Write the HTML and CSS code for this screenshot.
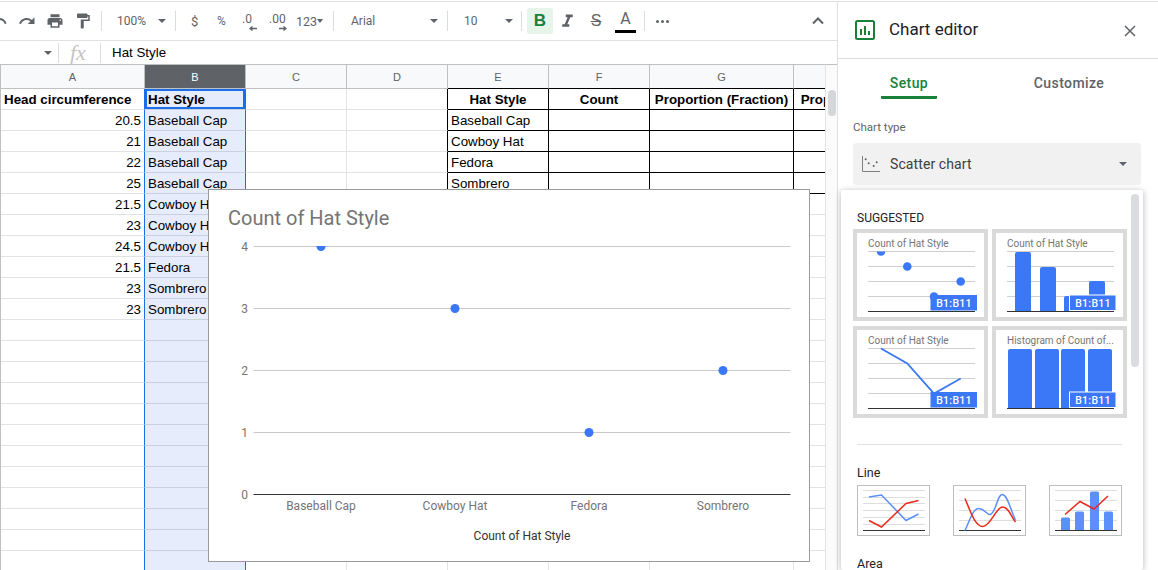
FILE: index.html
```html
<!DOCTYPE html>
<html lang="en">
<head>
  <meta charset="UTF-8">
  <title>Hat Style - Chart editor</title>
  <link rel="stylesheet" href="styles.css">
</head>
<body>

  <div class="page">
    <div class="main">

      <div class="toolbar">
        <svg class="tool-undo" viewBox="14 0 10 24" fill="#5f6368"><path d="M12.5 8c-2.65 0-5.05.99-6.9 2.6L2 7v9h9l-3.62-3.62c1.39-1.16 3.16-1.88 5.12-1.88 3.54 0 6.55 2.31 7.6 5.5l2.37-.78C21.08 11.03 17.15 8 12.5 8z"/></svg>
        <svg class="tool-icon redo" viewBox="0 0 24 24" fill="#5f6368"><path d="M18.4 10.6C16.55 8.99 14.15 8 11.5 8c-4.65 0-8.58 3.03-9.96 7.22L3.9 16c1.05-3.19 4.05-5.5 7.6-5.5 1.95 0 3.73.72 5.12 1.88L13 16h9V7l-3.6 3.6z"/></svg>
        <svg class="tool-icon print" viewBox="0 0 24 24" fill="#5f6368"><path d="M19 8H5c-1.66 0-3 1.34-3 3v6h4v4h12v-4h4v-6c0-1.66-1.34-3-3-3zm-3 11H8v-5h8v5zm3-7c-.55 0-1-.45-1-1s.45-1 1-1 1 .45 1 1-.45 1-1 1zm-1-9H6v4h12V3z"/></svg>
        <svg class="tool-icon paint" viewBox="0 0 24 24" fill="#5f6368"><path d="M18 4V3c0-.55-.45-1-1-1H5c-.55 0-1 .45-1 1v4c0 .55.45 1 1 1h12c.55 0 1-.45 1-1V6h1v4H9v11c0 .55.45 1 1 1h2c.55 0 1-.45 1-1v-9h8V4h-3z"/></svg>
        <span class="sep sep-zoom"></span>
        <span class="tool-text zoom-val">100%</span>
        <span class="caret caret-zoom"></span>
        <span class="sep sep-money"></span>
        <span class="tool-text dollar">$</span>
        <span class="tool-text percent">%</span>
        <span class="deci deci-less">.0<svg viewBox="0 0 8 5"><path d="M8 2.5H2M3.5 .5L1 2.5l2.5 2" fill="none" stroke="#5f6368" stroke-width="1.4"/></svg></span>
        <span class="deci deci-more">.00<svg viewBox="0 0 8 5"><path d="M0 2.5h6M4.5 .5L7 2.5l-2.5 2" fill="none" stroke="#5f6368" stroke-width="1.4"/></svg></span>
        <span class="tool-text format">123</span>
        <span class="caret caret-format"></span>
        <span class="sep sep-font"></span>
        <span class="tool-text font-name">Arial</span>
        <span class="caret caret-font"></span>
        <span class="sep sep-size"></span>
        <span class="tool-text font-size">10</span>
        <span class="caret caret-size"></span>
        <span class="sep sep-bold"></span>
        <span class="bold-btn">B</span>
        <svg class="tool-icon italic" viewBox="0 0 24 24" fill="#5f6368"><path d="M10 4v3h2.21l-3.42 8H6v3h8v-3h-2.21l3.42-8H18V4z"/></svg>
        <span class="strike">S</span>
        <span class="text-color">A</span>
        <span class="sep sep-more"></span>
        <span class="more-dots"><i></i><i></i><i></i></span>
        <svg class="collapse" viewBox="0 0 12 8"><path d="M1 6.5l5-5 5 5" fill="none" stroke="#5f6368" stroke-width="2"/></svg>
      </div>

      <div class="formula-bar">
        <span class="caret caret-name"></span>
        <span class="sep sep-name"></span>
        <span class="fx">fx</span>
        <span class="sep sep-fx"></span>
        <span class="formula-text">Hat Style</span>
      </div>

      <div class="sheet-area">
        <div class="sheet-wrap">
          <table class="sheet">
            <colgroup>
              <col class="col-wide"><col class="col-std"><col class="col-std"><col class="col-std">
              <col class="col-std"><col class="col-std"><col class="col-wide"><col class="col-wide">
            </colgroup>
            <tr class="heads"><th>A</th><th class="on">B</th><th>C</th><th>D</th><th>E</th><th>F</th><th>G</th><th>H</th></tr>
            <tr><td class="b">Head circumference</td><td class="b active">Hat Style</td><td></td><td class="rk"></td><td class="box b c">Hat Style</td><td class="box b c">Count</td><td class="box b c">Proportion (Fraction)</td><td class="box b c">Proportion (Percent)</td></tr>
            <tr><td class="n">20.5</td><td>Baseball Cap</td><td></td><td class="rk"></td><td class="box">Baseball Cap</td><td class="box"></td><td class="box"></td><td class="box"></td></tr>
            <tr><td class="n">21</td><td>Baseball Cap</td><td></td><td class="rk"></td><td class="box">Cowboy Hat</td><td class="box"></td><td class="box"></td><td class="box"></td></tr>
            <tr><td class="n">22</td><td>Baseball Cap</td><td></td><td class="rk"></td><td class="box">Fedora</td><td class="box"></td><td class="box"></td><td class="box"></td></tr>
            <tr><td class="n">25</td><td>Baseball Cap</td><td></td><td class="rk"></td><td class="box">Sombrero</td><td class="box"></td><td class="box"></td><td class="box"></td></tr>
            <tr><td class="n">21.5</td><td>Cowboy Hat</td><td></td><td></td><td></td><td></td><td></td><td></td></tr>
            <tr><td class="n">23</td><td>Cowboy Hat</td><td></td><td></td><td></td><td></td><td></td><td></td></tr>
            <tr><td class="n">24.5</td><td>Cowboy Hat</td><td></td><td></td><td></td><td></td><td></td><td></td></tr>
            <tr><td class="n">21.5</td><td>Fedora</td><td></td><td></td><td></td><td></td><td></td><td></td></tr>
            <tr><td class="n">23</td><td>Sombrero</td><td></td><td></td><td></td><td></td><td></td><td></td></tr>
            <tr><td class="n">23</td><td>Sombrero</td><td></td><td></td><td></td><td></td><td></td><td></td></tr>
            <tr><td></td><td></td><td></td><td></td><td></td><td></td><td></td><td></td></tr>
            <tr><td></td><td></td><td></td><td></td><td></td><td></td><td></td><td></td></tr>
            <tr><td></td><td></td><td></td><td></td><td></td><td></td><td></td><td></td></tr>
            <tr><td></td><td></td><td></td><td></td><td></td><td></td><td></td><td></td></tr>
            <tr><td></td><td></td><td></td><td></td><td></td><td></td><td></td><td></td></tr>
            <tr><td></td><td></td><td></td><td></td><td></td><td></td><td></td><td></td></tr>
            <tr><td></td><td></td><td></td><td></td><td></td><td></td><td></td><td></td></tr>
            <tr><td></td><td></td><td></td><td></td><td></td><td></td><td></td><td></td></tr>
            <tr><td></td><td></td><td></td><td></td><td></td><td></td><td></td><td></td></tr>
            <tr><td></td><td></td><td></td><td></td><td></td><td></td><td></td><td></td></tr>
            <tr><td></td><td></td><td></td><td></td><td></td><td></td><td></td><td></td></tr>
            <tr><td></td><td></td><td></td><td></td><td></td><td></td><td></td><td></td></tr>
          </table>
        </div>
        <div class="sheet-scroll"><div class="sheet-thumb"></div></div>
      </div>

      <!-- embedded chart sits over the cells -->
      <div class="chart">
        <svg class="chart-svg" viewBox="0 0 600 371">
          <defs>
            <clipPath id="plotClip"><rect x="40" y="56" width="545" height="250"/></clipPath>
          </defs>
          <text class="chart-title" x="19" y="35">Count of Hat Style</text>
          <g stroke="#c9c9c9" stroke-width="1">
            <line x1="44.5" x2="581.5" y1="56.5" y2="56.5"/>
            <line x1="44.5" x2="581.5" y1="118.5" y2="118.5"/>
            <line x1="44.5" x2="581.5" y1="180.5" y2="180.5"/>
            <line x1="44.5" x2="581.5" y1="242.5" y2="242.5"/>
          </g>
          <line x1="44.5" x2="581.5" y1="304.5" y2="304.5" stroke="#333" stroke-width="1"/>
          <g class="chart-y">
            <text x="39" y="60.5">4</text>
            <text x="39" y="122.5">3</text>
            <text x="39" y="184.5">2</text>
            <text x="39" y="246.5">1</text>
            <text x="39" y="308.5">0</text>
          </g>
          <g fill="#3b78f7" clip-path="url(#plotClip)">
            <circle cx="112" cy="56.5" r="4.5"/>
            <circle cx="246" cy="118.5" r="4.5"/>
            <circle cx="380" cy="242.5" r="4.5"/>
            <circle cx="514" cy="180.5" r="4.5"/>
          </g>
          <g class="chart-x">
            <text x="112" y="320">Baseball Cap</text>
            <text x="246" y="320">Cowboy Hat</text>
            <text x="380" y="320">Fedora</text>
            <text x="514" y="320">Sombrero</text>
          </g>
          <text class="chart-axis-title" x="313" y="350">Count of Hat Style</text>
        </svg>
      </div>
    </div>

    <div class="panel">
      <div class="panel-head">
        <svg class="panel-logo" viewBox="0 0 20 20">
          <rect x="1" y="1" width="18" height="18" rx="1.5" fill="none" stroke="#188038" stroke-width="2"/>
          <path d="M5 9h2v6H5zM9 6h2v9H9zM13 11h2v4h-2z" fill="#188038"/>
        </svg>
        <span class="panel-title">Chart editor</span>
        <svg class="panel-close" viewBox="0 0 12 12"><path d="M1 1l10 10M11 1L1 11" stroke="#5f6368" stroke-width="1.5" fill="none"/></svg>
      </div>
      <div class="tabs">
        <span class="tab tab-on">Setup</span>
        <span class="tab">Customize</span>
      </div>
      <div class="type-label">Chart type</div>
      <div class="type-select">
        <svg class="type-icon" viewBox="0 0 18 16">
          <path d="M.5 0v15.5H18" fill="none" stroke="#5f6368" stroke-width=".8"/>
          <g fill="#5f6368"><circle cx="3.7" cy="3.3" r="1"/><circle cx="6.7" cy="7.3" r="1"/><circle cx="11.7" cy="10" r="1"/><circle cx="14.7" cy="6.3" r="1"/></g>
        </svg>
        <span class="type-name">Scatter chart</span>
        <span class="caret"></span>
      </div>

      <!-- open dropdown, lies over the rest of the panel -->
      <div class="picker">
        <div class="picker-thumb"></div>
        <div class="picker-head">SUGGESTED</div>
        <div class="suggest">
          <div class="suggest-card">
            <svg viewBox="0 0 127 84">
              <text class="mini-title" x="11" y="14">Count of Hat Style</text>
              <g stroke="#cfcfcf"><path d="M11 18.5h107M11 33.5h107M11 48.5h107M11 63.5h107"/></g>
              <path d="M11 78.5h107" stroke="#333"/>
              <g fill="#3b78f7">
                <path d="M19.7 18.5a4.3 4.3 0 0 0 8.6 0z"/>
                <circle cx="50.3" cy="33.5" r="4.3"/>
                <circle cx="77" cy="63.5" r="4.3"/>
                <circle cx="103.7" cy="48.5" r="4.3"/>
              </g>
              <rect class="badge" x="73.5" y="62" width="46.5" height="15.5"/>
              <text class="badge-text" x="97" y="74">B1:B11</text>
            </svg>
          </div>
          <div class="suggest-card">
            <svg viewBox="0 0 127 84">
              <text class="mini-title" x="11" y="14">Count of Hat Style</text>
              <g stroke="#cfcfcf"><path d="M11 18.5h107M11 33.5h107M11 48.5h107M11 63.5h107"/></g>
              <g fill="#3b78f7">
                <path d="M19 78.5V21a2 2 0 0 1 2-2h12a2 2 0 0 1 2 2v57.5z"/>
                <path d="M44 78.5V36a2 2 0 0 1 2-2h12a2 2 0 0 1 2 2v42.5z"/>
                <path d="M68 78.5V65a2 2 0 0 1 2-2h14v15.5z"/>
                <path d="M93 78.5V50a2 2 0 0 1 2-2h12a2 2 0 0 1 2 2v28.5z"/>
              </g>
              <path d="M11 78.5h107" stroke="#333"/>
              <rect class="badge badge-line" x="73.5" y="62" width="46.5" height="15.5"/>
              <text class="badge-text" x="97" y="74">B1:B11</text>
            </svg>
          </div>
          <div class="suggest-card">
            <svg viewBox="0 0 127 84">
              <text class="mini-title" x="11" y="14">Count of Hat Style</text>
              <g stroke="#cfcfcf"><path d="M11 18.5h107M11 33.5h107M11 48.5h107M11 63.5h107"/></g>
              <path d="M11 78.5h107" stroke="#333"/>
              <path d="M24 18.5l26.3 15L77 63.5l26.7-15" fill="none" stroke="#3b78f7" stroke-width="1.8"/>
              <rect class="badge" x="73.5" y="62" width="46.5" height="15.5"/>
              <text class="badge-text" x="97" y="74">B1:B11</text>
            </svg>
          </div>
          <div class="suggest-card">
            <svg viewBox="0 0 127 84">
              <text class="mini-title" x="11" y="14">Histogram of Count of...</text>
              <g fill="#3b78f7">
                <path d="M12 78.5V21a2 2 0 0 1 2-2h20a2 2 0 0 1 2 2v57.5z"/>
                <path d="M39 78.5V21a2 2 0 0 1 2-2h20a2 2 0 0 1 2 2v57.5z"/>
                <path d="M65 78.5V21a2 2 0 0 1 2-2h20a2 2 0 0 1 2 2v57.5z"/>
                <path d="M92 78.5V21a2 2 0 0 1 2-2h20a2 2 0 0 1 2 2v57.5z"/>
              </g>
              <path d="M11 78.5h107" stroke="#333"/>
              <rect class="badge badge-line" x="73.5" y="62" width="46.5" height="15.5"/>
              <text class="badge-text" x="97" y="74">B1:B11</text>
            </svg>
          </div>
        </div>
        <div class="picker-rule"></div>
        <div class="group-label">Line</div>
        <div class="mini-row">
          <div class="mini-card">
            <svg viewBox="0 0 71 49">
              <path d="M5 4.5h62M5 11.5h62M5 17.5h62M5 24.5h62M5 31.5h62M5 38.5h62" stroke="#dedede"/>
              <path d="M5 44.5h62" stroke="#333"/>
              <path d="M11 11l12.5-2L48 34.5l12.5-6.500" fill="none" stroke="#5b8ff9" stroke-width="1.5"/>
              <path d="M11 34.500L23.500 41 48 17.500l12.500-3" fill="none" stroke="#ea2a1a" stroke-width="1.5"/>
            </svg>
          </div>
          <div class="mini-card">
            <svg viewBox="0 0 71 49">
              <path d="M5 4.500h62M5 14.500h62M5 24.500h62M5 34.500h62" stroke="#dedede"/>
              <path d="M5 44.500h62" stroke="#333"/>
              <path d="M11 44.500C16 34 19 22 25 22.500s7 6 11 6C42 28 43 8 48.500 8.500S57 26 61.500 34" fill="none" stroke="#5b8ff9" stroke-width="1.5"/>
              <path d="M11 12.500C16 24 21 41 29 40.500S42 21 48.500 21S57 31 61.500 36" fill="none" stroke="#ea2a1a" stroke-width="1.500"/>
            </svg>
          </div>
          <div class="mini-card">
            <svg viewBox="0 0 71 49">
              <path d="M5 4.500h62M5 14.500h62M5 24.500h62M5 34.500h62" stroke="#dedede"/>
              <g fill="#5b8ff9">
                <path d="M11 44.500V33a1.500 1.500 0 0 1 1.500-1.500h6a1.500 1.500 0 0 1 1.500 1.500v11.500z"/>
                <path d="M25 44.500V27a1.500 1.500 0 0 1 1.500-1.500h6a1.500 1.500 0 0 1 1.500 1.500v17.500z"/>
                <path d="M40 44.500V7a1.500 1.500 0 0 1 1.500-1.500h6A1.500 1.500 0 0 1 49 7v37.500z"/>
                <path d="M54 44.500V27a1.500 1.500 0 0 1 1.500-1.500h6A1.500 1.500 0 0 1 63 27v17.500z"/>
              </g>
              <path d="M5 44.500h62" stroke="#333"/>
              <path d="M15 28.500l15-13 14 7.500 14-13" fill="none" stroke="#ea2a1a" stroke-width="1.500"/>
            </svg>
          </div>
        </div>
        <div class="group-label group-area">Area</div>
      </div>
    </div>
  </div>

</body>
</html>
```

FILE: styles.css
```css
* {
  box-sizing: border-box;
}

html, body {
  margin: 0;
  height: 570px;
  overflow: hidden;
  background-color: #ffffff;
  font-family: "Liberation Sans", Arial, sans-serif;
}

.page {
  display: flex;
  height: 570px;
  padding-top: 1px;
}

.main {
  position: relative;
  width: 837px;
  flex: none;
  display: flex;
  flex-direction: column;
}

/* toolbar */

.toolbar {
  display: flex;
  align-items: center;
  height: 40px;
  flex: none;
  border-top: 1px solid #e0e0e0;
  border-bottom: 1px solid #e0e0e0;
  font-family: Roboto, sans-serif;
  font-size: 12px;
  color: #5f6368;
}

.tool-undo {
  width: 8px;
  height: 18px;
  flex: none;
}

.tool-icon {
  width: 18px;
  height: 18px;
  flex: none;
}

.redo { margin-left: 10px; }
.print { margin-left: 10px; }
.paint { margin-left: 10px; }

.sep {
  width: 1px;
  height: 20px;
  flex: none;
  background-color: #dadce0;
}

.sep-zoom { margin-left: 9px; }
.tool-text { flex: none; }
.zoom-val { margin-left: 15px; width: 41px; }
.sep-money { margin-left: 9px; }
.dollar { margin-left: 15px; width: 12px; font-size: 13px; }
.percent { margin-left: 14px; width: 12px; }

.caret {
  width: 0;
  height: 0;
  flex: none;
  border-left: 4px solid transparent;
  border-right: 4px solid transparent;
  border-top: 4px solid #5f6368;
}

.deci {
  display: flex;
  flex-direction: column;
  flex: none;
  height: 22px;
  margin-top: 4px;
  line-height: 14px;
  font-size: 12px;
}

.deci svg {
  width: 8px;
  height: 5px;
  flex: none;
}

.deci-less { margin-left: 13px; width: 16px; }
.deci-less svg { margin-left: 7px; }
.deci-more { margin-left: 11px; width: 18px; }
.deci-more svg { margin-left: 10px; }
.format { margin-left: 9px; width: 21px; font-size: 12.5px; }
.caret-format { border-width: 4px 3.5px 0; }
.sep-font { margin-left: 10px; }
.font-name { margin-left: 17px; width: 79px; font-size: 12px; }
.sep-size { margin-left: 9px; }
.font-size { margin-left: 16px; width: 41px; }
.sep-bold { margin-left: 8px; }

.bold-btn {
  width: 26px;
  height: 26px;
  margin-left: 5px;
  flex: none;
  display: flex;
  align-items: center;
  justify-content: center;
  border-radius: 2px;
  background-color: #e6f4ea;
  color: #188038;
  font-family: "Liberation Sans", sans-serif;
  font-weight: bold;
  font-size: 17px;
}

.italic {
  width: 21px;
  height: 21px;
  margin-left: 4px;
}

.strike {
  width: 16px;
  margin-left: 10px;
  flex: none;
  text-align: center;
  font-family: "Liberation Sans", sans-serif;
  font-size: 16px;
  text-decoration: line-through;
}

.text-color {
  width: 21px;
  height: 23px;
  margin-left: 11px;
  flex: none;
  text-align: center;
  border-bottom: 3px solid #000000;
  font-size: 16px;
  line-height: 17px;
}

.sep-more { margin-left: 8px; }

.more-dots {
  display: flex;
  gap: 2px;
  margin-left: 11px;
  flex: none;
}

.more-dots i {
  width: 3px;
  height: 3px;
  border-radius: 50%;
  background-color: #5f6368;
}

.collapse {
  width: 12px;
  height: 8px;
  margin-left: 143px;
  flex: none;
}

/* formula bar */

.formula-bar {
  display: flex;
  align-items: center;
  height: 23px;
  flex: none;
  padding-left: 44px;
}

.sep-name { margin-left: 6px; }

.fx {
  width: 41px;
  padding-left: 11px;
  flex: none;
  font-family: "Liberation Serif", serif;
  font-style: italic;
  font-size: 22px;
  color: #c4c4c4;
}

.formula-text {
  margin-left: 11px;
  font-size: 13.33px;
  color: #000000;
}

/* cells */

.sheet-area {
  display: flex;
  flex: 1;
  min-height: 0;
}

.sheet-wrap {
  width: 825px;
  flex: none;
  overflow: hidden;
  border-top: 1px solid #c0c0c0;
  border-left: 1px solid #c0c0c0;
}

.sheet {
  width: 937px;
  table-layout: fixed;
  border-collapse: separate;
  border-spacing: 0;
  font-size: 13.33px;
  color: #000000;
}

.col-wide { width: 144px; }
.col-std { width: 101px; }

.sheet th {
  height: 24px;
  padding: 0;
  background-color: #f8f9fa;
  border-right: 1px solid #c0c0c0;
  border-bottom: 1px solid #c0c0c0;
  font-weight: normal;
  font-size: 11px;
  color: #5f6368;
}

.sheet th.on {
  background-color: #5f6368;
  color: #ffffff;
}

.sheet td {
  height: 21px;
  padding: 0 3px;
  overflow: hidden;
  white-space: nowrap;
  border-right: 1px solid #e2e3e3;
  border-bottom: 1px solid #e2e3e3;
}

.sheet td:nth-child(1) {
  border-right-color: #1a6fe8;
}

.sheet td:nth-child(2) {
  background-color: #e6ecfb;
  border-right-color: #1a6fe8;
  border-bottom-color: #c8d0e2;
}

.sheet .b { font-weight: bold; }
.sheet .c { text-align: center; }
.sheet .n { text-align: right; }

.sheet td.active {
  box-shadow: inset 0 0 0 2px #1a6fe8;
  padding-left: 3px;
}

.sheet td.rk {
  border-right-color: #000000;
}

.sheet td.box {
  border-right-color: #000000;
  border-bottom-color: #000000;
}

.sheet .heads th:nth-child(n+5) {
  border-bottom-color: #000000;
}

.sheet-scroll {
  width: 12px;
  flex: none;
  padding: 25px 1px 0 2px;
  background-color: #fbfbfb;
  border-top: 1px solid #c0c0c0;
  border-left: 1px solid #e2e3e3;
}

.sheet-thumb {
  height: 26px;
  border-radius: 4px;
  background-color: #d4d6da;
}

/* embedded chart */

.chart {
  position: absolute;
  left: 208px;
  top: 188px;
  width: 602px;
  height: 373px;
  background-color: #ffffff;
  border: 1px solid #9a9a9a;
}

.chart-svg {
  display: block;
  width: 600px;
  height: 371px;
  font-family: Roboto, sans-serif;
}

.chart-title {
  font-size: 20px;
  fill: #757575;
}

.chart-y text {
  font-size: 12px;
  fill: #757575;
  text-anchor: end;
}

.chart-x text {
  font-size: 12px;
  fill: #757575;
  text-anchor: middle;
}

.chart-axis-title {
  font-size: 12px;
  fill: #333333;
  text-anchor: middle;
}

/* chart editor panel */

.panel {
  position: relative;
  flex: 1;
  border-left: 1px solid #e0e0e0;
  font-family: Roboto, sans-serif;
}

.panel-head {
  display: flex;
  align-items: center;
  height: 58px;
  padding: 0 22px 0 17px;
  border-top: 1px solid #e0e0e0;
  border-bottom: 1px solid #dadce0;
}

.panel-logo {
  width: 20px;
  height: 20px;
  flex: none;
}

.panel-title {
  margin: 0 0 2px 14px;
  flex: 1;
  font-size: 17px;
  color: #202124;
}

.panel-close {
  width: 12px;
  height: 12px;
  margin-top: 2px;
  flex: none;
}

.tabs {
  display: flex;
  height: 40px;
  padding: 0 53px 0 43px;
  justify-content: space-between;
}

.tab {
  width: 56px;
  height: 40px;
  padding-top: 15px;
  font-size: 14px;
  font-weight: 500;
  letter-spacing: .4px;
  line-height: 18px;
  text-align: center;
  white-space: nowrap;
  color: #5f6368;
}

.tab + .tab {
  width: 72px;
}

.tab-on {
  color: #188038;
  border-bottom: 3px solid #188038;
  border-radius: 0 0 1px 1px;
}

.type-label {
  margin: 21px 0 0 15px;
  font-size: 11.5px;
  line-height: 14px;
  color: #5f6368;
}

.type-select {
  display: flex;
  align-items: center;
  height: 42px;
  margin: 9px 17px 0 15px;
  padding: 0 14px 0 9px;
  border-radius: 4px;
  background-color: #f1f1f1;
}

.type-icon {
  width: 18px;
  height: 16px;
  flex: none;
}

.type-name {
  margin-left: 10px;
  flex: 1;
  font-size: 14px;
  letter-spacing: .1px;
  color: #3c4043;
}

.picker {
  position: absolute;
  left: 3px;
  top: 189px;
  width: 302px;
  height: 380px;
  padding: 0 16px;
  overflow: hidden;
  background-color: #ffffff;
  border-radius: 2px;
  box-shadow: 0 1px 6px rgba(0, 0, 0, .3);
}

.picker-thumb {
  position: absolute;
  right: 4px;
  top: 4px;
  width: 8px;
  height: 173px;
  border-radius: 4px;
  background-color: #dadce0;
}

.picker-head {
  margin-top: 20px;
  font-size: 12px;
  line-height: 16px;
  color: #202124;
}

.suggest {
  display: grid;
  grid-template-columns: 135px 135px;
  grid-auto-rows: 92px;
  gap: 5px 4px;
  margin: 3px 0 0 -4px;
}

.suggest-card {
  border: 4px solid #dadada;
}

.suggest-card svg {
  display: block;
  width: 127px;
  height: 84px;
  fill: none;
}

.mini-title {
  font-size: 10px;
  fill: #757575;
}

.badge {
  fill: #3b78f7;
}

.badge-line {
  stroke: #ffffff;
  stroke-width: 1;
}

.badge-text {
  font-size: 10.5px;
  font-weight: 500;
  letter-spacing: .3px;
  fill: #ffffff;
  text-anchor: middle;
}

.picker-rule {
  width: 265px;
  height: 1px;
  margin-top: 26px;
  background-color: #e0e0e0;
}

.group-label {
  margin-top: 20px;
  font-size: 12.5px;
  line-height: 15px;
  color: #202124;
}

.mini-row {
  display: flex;
  gap: 23px;
  margin-top: 5px;
}

.mini-card {
  width: 73px;
  height: 51px;
  flex: none;
  border: 1px solid #bdbdbd;
}

.mini-card svg {
  display: block;
  width: 71px;
  height: 49px;
}

.group-area {
  margin-top: 20px;
}
```
